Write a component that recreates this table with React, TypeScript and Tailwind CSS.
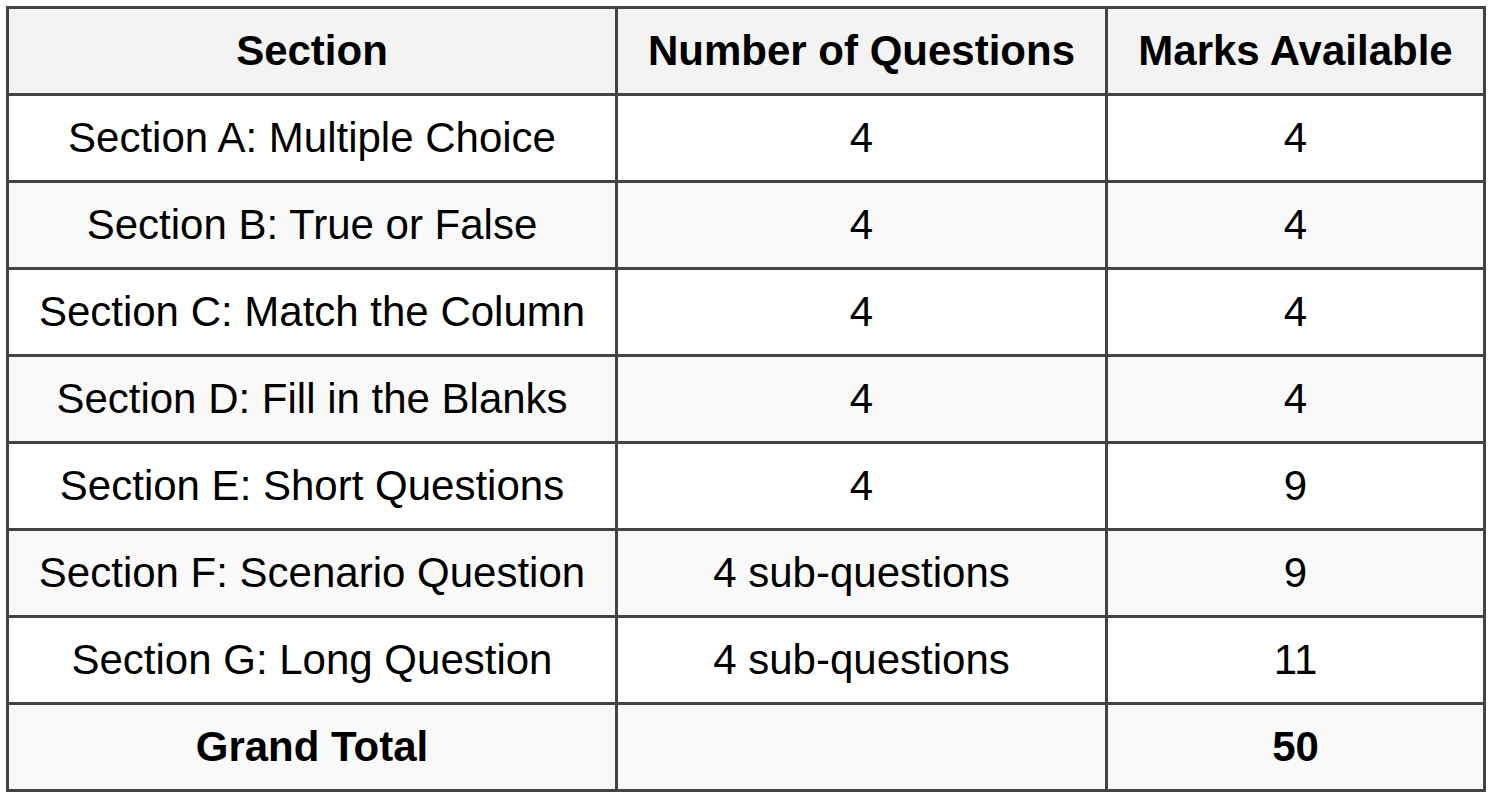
const rows = [
  { section: "Section A: Multiple Choice", questions: "4", marks: "4" },
  { section: "Section B: True or False", questions: "4", marks: "4" },
  { section: "Section C: Match the Column", questions: "4", marks: "4" },
  { section: "Section D: Fill in the Blanks", questions: "4", marks: "4" },
  { section: "Section E: Short Questions", questions: "4", marks: "9" },
  { section: "Section F: Scenario Question", questions: "4 sub-questions", marks: "9" },
  { section: "Section G: Long Question", questions: "4 sub-questions", marks: "11" },
];

export default function App() {
  const cell = "flex items-center justify-center text-[42px] leading-none text-black";

  return (
    <div
      className="min-h-screen bg-white pt-[6px] pl-[6px]"
      style={{ fontFamily: '"Liberation Sans", Arial, sans-serif' }}
    >
      <div className="grid w-[1480px] grid-cols-[606px_487px_375px] auto-rows-[84px] gap-[3px] bg-[#434343] p-[3px]">
        {/* header */}
        <div className={`${cell} bg-[#f3f3f3] font-bold`}>Section</div>
        <div className={`${cell} bg-[#f3f3f3] font-bold`}>Number of Questions</div>
        <div className={`${cell} bg-[#f3f3f3] font-bold`}>Marks Available</div>

        {rows.map((r, i) => {
          const bg = i % 2 === 0 ? "bg-white" : "bg-[#f9f9f9]";
          return [
            <div key={r.section + "a"} className={`${cell} ${bg}`}>{r.section}</div>,
            <div key={r.section + "b"} className={`${cell} ${bg}`}>{r.questions}</div>,
            <div key={r.section + "c"} className={`${cell} ${bg}`}>{r.marks}</div>,
          ];
        })}

        <div className={`${cell} bg-[#f9f9f9] font-bold`}>Grand Total</div>
        <div className={`${cell} bg-[#f9f9f9]`}></div>
        <div className={`${cell} bg-[#f9f9f9] font-bold`}>50</div>
      </div>
    </div>
  );
}
